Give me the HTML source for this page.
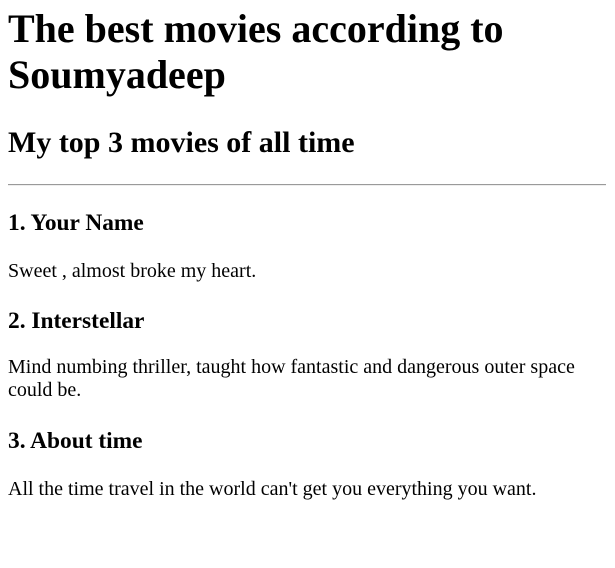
<!DOCTYPE html>
<html><head><meta charset="utf-8"><style>
html,body{margin:0;padding:0;background:#fff;width:615px;height:568px;overflow:hidden}
body{font-family:"Liberation Serif",serif;color:#000;position:relative}
.a{position:absolute;left:8px;margin:0;white-space:nowrap}
h1.a{font-size:40px;line-height:46px;font-weight:bold;white-space:normal;width:599px}
h2.a{font-size:30px;line-height:34.5px;font-weight:bold}
h3.a{font-size:23.4px;line-height:27px;font-weight:bold}
p.a{font-size:20px;line-height:23px;white-space:normal;width:599px}
.hr{position:absolute;left:8px;top:184px;width:598px;height:1px;background:#9a9a9a;border-bottom:1px solid #eee}
</style></head><body>
<h1 class="a" style="top:6px">The best movies according to Soumyadeep</h1>
<h2 class="a" style="top:125.5px">My top 3 movies of all time</h2>
<div class="hr"></div>
<h3 class="a" style="top:209.6px">1. Your Name</h3>
<p class="a" style="top:259.75px">Sweet , almost broke my heart.</p>
<h3 class="a" style="top:307.6px">2. Interstellar</h3>
<p class="a" style="top:355.75px">Mind numbing thriller, taught how fantastic and dangerous outer space could be.</p>
<h3 class="a" style="top:427.6px">3. About time</h3>
<p class="a" style="top:477.75px">All the time travel in the world can't get you everything you want.</p>
</body></html>
